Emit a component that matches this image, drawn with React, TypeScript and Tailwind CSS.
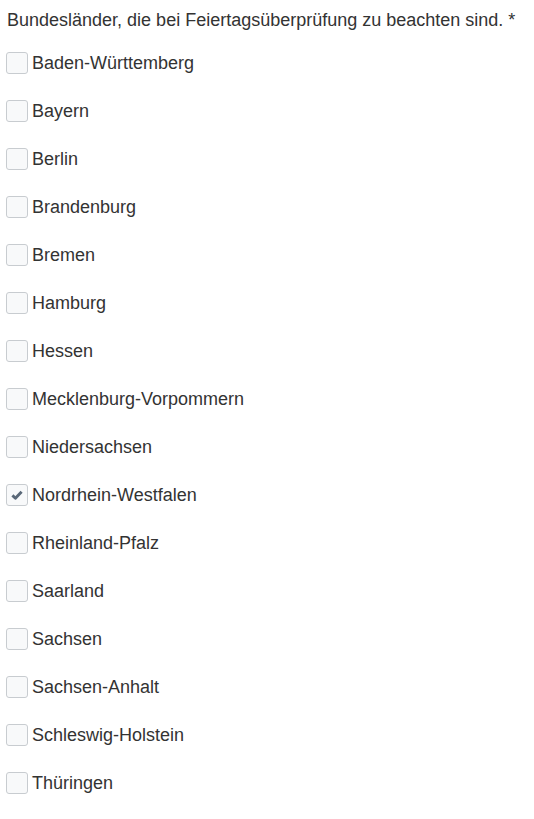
const states = [
  "Baden-Württemberg",
  "Bayern",
  "Berlin",
  "Brandenburg",
  "Bremen",
  "Hamburg",
  "Hessen",
  "Mecklenburg-Vorpommern",
  "Niedersachsen",
  "Nordrhein-Westfalen",
  "Rheinland-Pfalz",
  "Saarland",
  "Sachsen",
  "Sachsen-Anhalt",
  "Schleswig-Holstein",
  "Thüringen",
];

const checked = "Nordrhein-Westfalen";

const App = () => {
  return (
    <div className="min-h-screen bg-white pt-[8px] text-[#333] font-['Liberation_Sans',Arial,sans-serif]">
      <p className="pl-[7px] text-[18px] leading-[25px]">
        Bundesländer, die bei Feiertagsüberprüfung zu beachten sind. *
      </p>
      <ul className="mt-[19px] flex flex-col gap-[26px] pl-[6px]">
        {states.map((s) => (
          <li key={s} className="flex h-[22px] items-center">
            <span className="flex h-[22px] w-[22px] shrink-0 items-center justify-center rounded-[3px] border border-[#c8ccd0] bg-[#f8f9fa]">
              {s === checked && (
                <svg width="12" height="10" viewBox="0 0 12 10">
                  <path
                    d="M1.4 5.4 L4.4 8.2 L10.6 1.8"
                    fill="none"
                    stroke="#5a6878"
                    strokeWidth="2.9"
                    strokeLinejoin="round"
                  />
                </svg>
              )}
            </span>
            <span className="ml-[4px] text-[18px] leading-[22px]">{s}</span>
          </li>
        ))}
      </ul>
    </div>
  );
};

export default App;
